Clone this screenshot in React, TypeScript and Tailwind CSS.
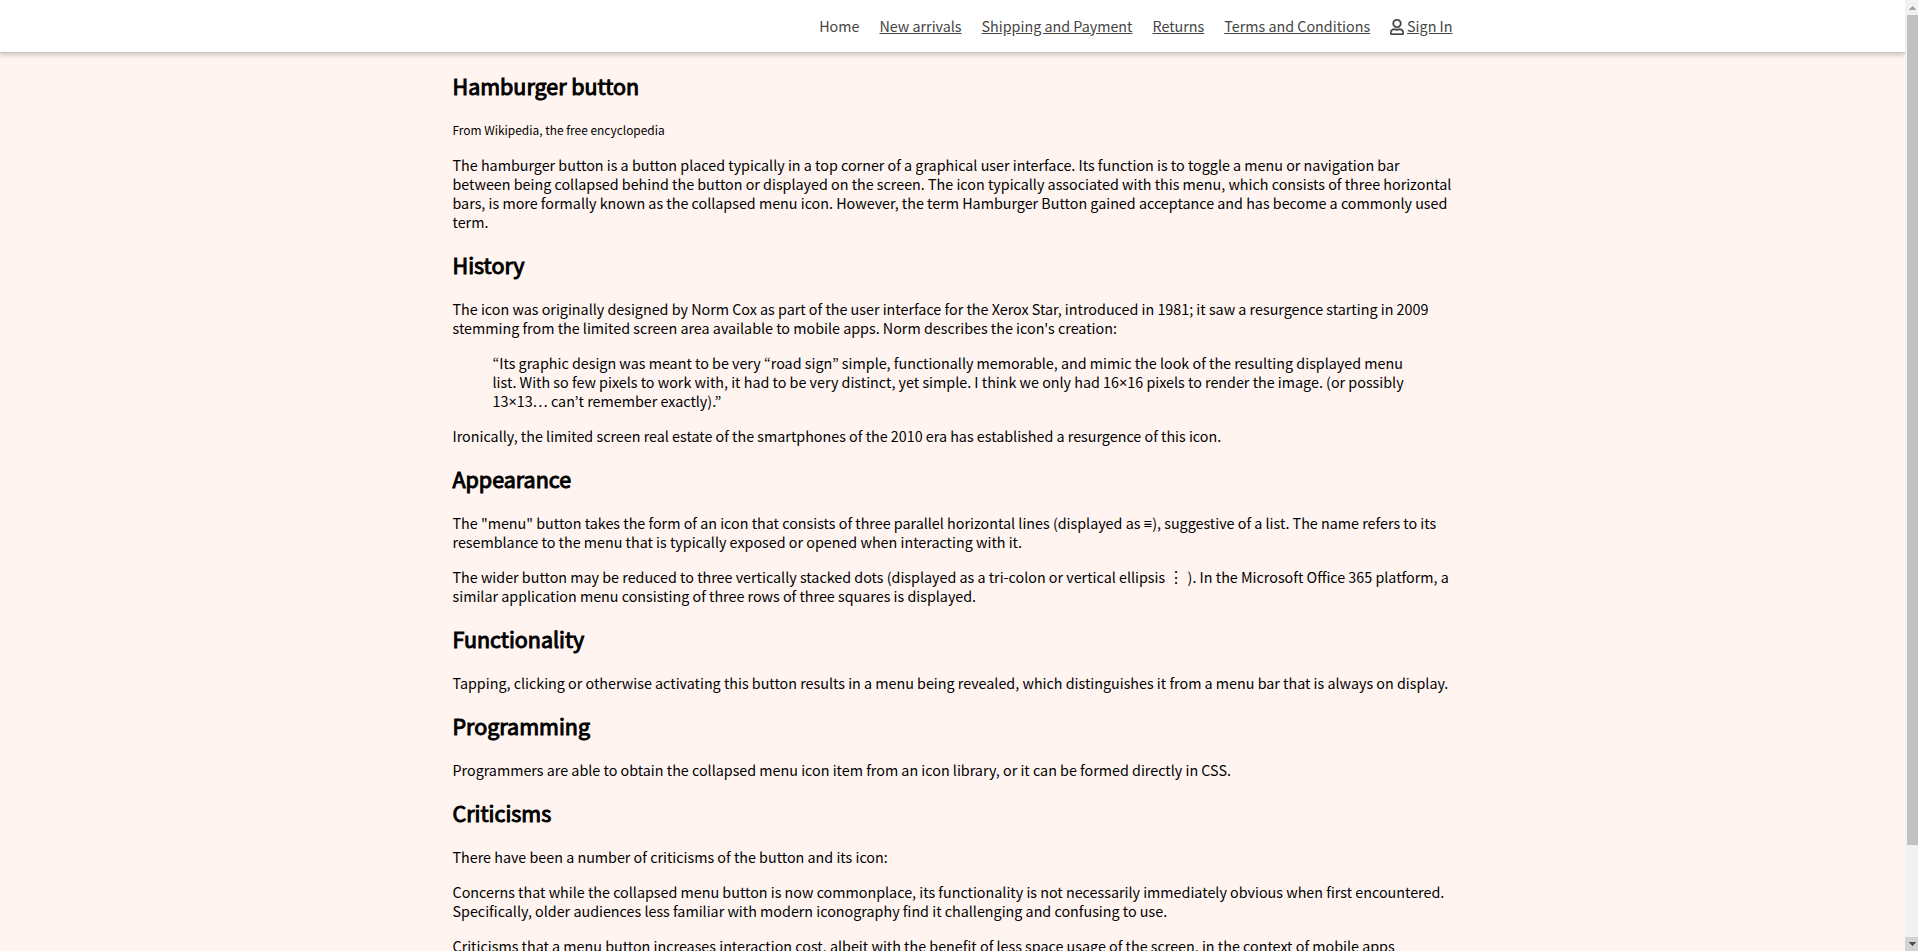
import type { ReactNode } from "react";

const links = ["New arrivals", "Shipping and Payment", "Returns", "Terms and Conditions"];

function Heading({ children }: { children: ReactNode }) {
  return (
    <h2 className="my-5 text-2xl leading-7 font-normal [-webkit-text-stroke:1px_black]">{children}</h2>
  );
}

function Text({ children }: { children: ReactNode }) {
  return <p className="my-4">{children}</p>;
}

function Times() {
  return <span className="font-['Noto_Sans',sans-serif] leading-none">×</span>;
}

function UserIcon() {
  return (
    <svg
      viewBox="0 0 448 512"
      className="h-4 w-3.5"
      fill="currentColor"
      stroke="currentColor"
      strokeWidth="10"
      aria-hidden="true"
    >
      <path d="M313.600 304c-28.700 0-42.500 16-89.600 16-47.100 0-60.800-16-89.600-16C60.200 304 0 364.200 0 438.400V464c0 26.500 21.500 48 48 48h352c26.500 0 48-21.500 48-48v-25.600c0-74.200-60.200-134.400-134.400-134.400zM400 464H48v-25.600c0-47.600 38.800-86.400 86.400-86.400 14.600 0 38.300 16 89.600 16 51.700 0 74.900-16 89.600-16 47.600 0 86.400 38.800 86.400 86.400V464zM224 288c79.500 0 144-64.500 144-144S303.500 0 224 0 80 64.500 80 144s64.500 144 144 144zm0-240c52.900 0 96 43.100 96 96s-43.100 96-96 96-96-43.100-96-96 43.100-96 96-96z" />
    </svg>
  );
}

function Scrollbar() {
  return (
    <div className="flex w-[13px] shrink-0 flex-col bg-[#f1f1f1]" aria-hidden="true">
      <div className="flex h-[15px] items-center justify-center pl-0.5">
        <svg viewBox="0 0 7 4" className="h-1 w-[7px]" shapeRendering="crispEdges">
          <path d="M3 0h1v1h1v1h1v1h1v1H0V3h1V2h1V1h1z" fill="#a3a3a3" />
        </svg>
      </div>
      <div className="flex flex-1 flex-col pl-0.5">
        <div className="h-[90%] bg-[#c1c1c1]" />
      </div>
      <div className="flex h-[14px] items-center justify-center bg-[#d2d2d2] pl-0.5">
        <svg viewBox="0 0 7 4" className="h-1 w-[7px]" shapeRendering="crispEdges">
          <path d="M0 0h7v1H6v1H5v1H4v1H3V3H2V2H1V1H0z" fill="#505050" />
        </svg>
      </div>
    </div>
  );
}

export default function App() {
  return (
    <div className="flex h-screen overflow-hidden font-['Noto_Sans_CJK_KR','Noto_Sans',sans-serif] text-base leading-[19px] text-black [font-size-adjust:0.486]">
      <div className="min-w-0 flex-1 overflow-hidden bg-[#fff4f0]">
        <header className="relative border-b border-[#c4c4c4] bg-white text-[#444] shadow-[0_2px_5px_rgba(0,0,0,0.2)]">
          <nav className="mx-auto flex h-[52px] max-w-[1000px] items-center justify-end gap-5 pb-0.5">
            <a href="#home">Home</a>
            {links.map((link) => (
              <a key={link} href="#shop" className="underline">
                {link}
              </a>
            ))}
            <a href="#sign-in" className="flex items-end gap-[3px]">
              <UserIcon />
              <span className="underline">Sign In</span>
            </a>
          </nav>
        </header>
        <main className="mx-auto -mt-px flow-root max-w-[1000px]">
          <Heading>Hamburger button</Heading>
          <p className="my-4 [font-size:smaller]">From Wikipedia, the free encyclopedia</p>
          <Text>
            The hamburger button is a button placed typically in a top corner of a graphical user interface. Its
            function is to toggle a menu or navigation bar between being collapsed behind the button or displayed on
            the screen. The icon typically associated with this menu, which consists of three horizontal bars, is more
            formally known as the collapsed menu icon. However, the term Hamburger Button gained acceptance and has
            become a commonly used term.
          </Text>
          <Heading>History</Heading>
          <Text>
            The icon was originally designed by Norm Cox as part of the user interface for the Xerox Star, introduced
            in 1981; it saw a resurgence starting in 2009 stemming from the limited screen area available to mobile
            apps. Norm describes the icon's creation:
          </Text>
          <blockquote className="mx-10 my-4">
            “Its graphic design was meant to be very “road sign” simple, functionally memorable, and mimic the look of
            the resulting displayed menu list. With so few pixels to work with, it had to be very distinct, yet
            simple. I think we only had 16
            <Times />
            16 pixels to render the image. (or possibly 13
            <Times />
            13… can’t remember exactly).”
          </blockquote>
          <Text>
            Ironically, the limited screen real estate of the smartphones of the 2010 era has established a resurgence
            of this icon.
          </Text>
          <Heading>Appearance</Heading>
          <Text>
            The "menu" button takes the form of an icon that consists of three parallel horizontal lines (displayed as{" "}
            <span className="font-['Liberation_Sans',sans-serif] leading-none">≡</span>), suggestive of a list. The
            name refers to its resemblance to the menu that is typically exposed or opened when interacting with it.
          </Text>
          <Text>
            The wider button may be reduced to three vertically stacked dots (displayed as a tri-colon or vertical
            ellipsis <span className="leading-none [font-size-adjust:none]">⋮</span> ). In the Microsoft Office 365
            platform, a similar application menu consisting of three rows of three squares is displayed.
          </Text>
          <Heading>Functionality</Heading>
          <Text>
            Tapping, clicking or otherwise activating this button results in a menu being revealed, which
            distinguishes it from a menu bar that is always on display.
          </Text>
          <Heading>Programming</Heading>
          <Text>
            Programmers are able to obtain the collapsed menu icon item from an icon library, or it can be formed
            directly in CSS.
          </Text>
          <Heading>Criticisms</Heading>
          <Text>There have been a number of criticisms of the button and its icon:</Text>
          <Text>
            Concerns that while the collapsed menu button is now commonplace, its functionality is not necessarily
            immediately obvious when first encountered. Specifically, older audiences less familiar with modern
            iconography find it challenging and confusing to use.
          </Text>
          <Text>
            Criticisms that a menu button increases interaction cost, albeit with the benefit of less space usage of
            the screen, in the context of mobile apps
          </Text>
        </main>
      </div>
      <Scrollbar />
    </div>
  );
}
